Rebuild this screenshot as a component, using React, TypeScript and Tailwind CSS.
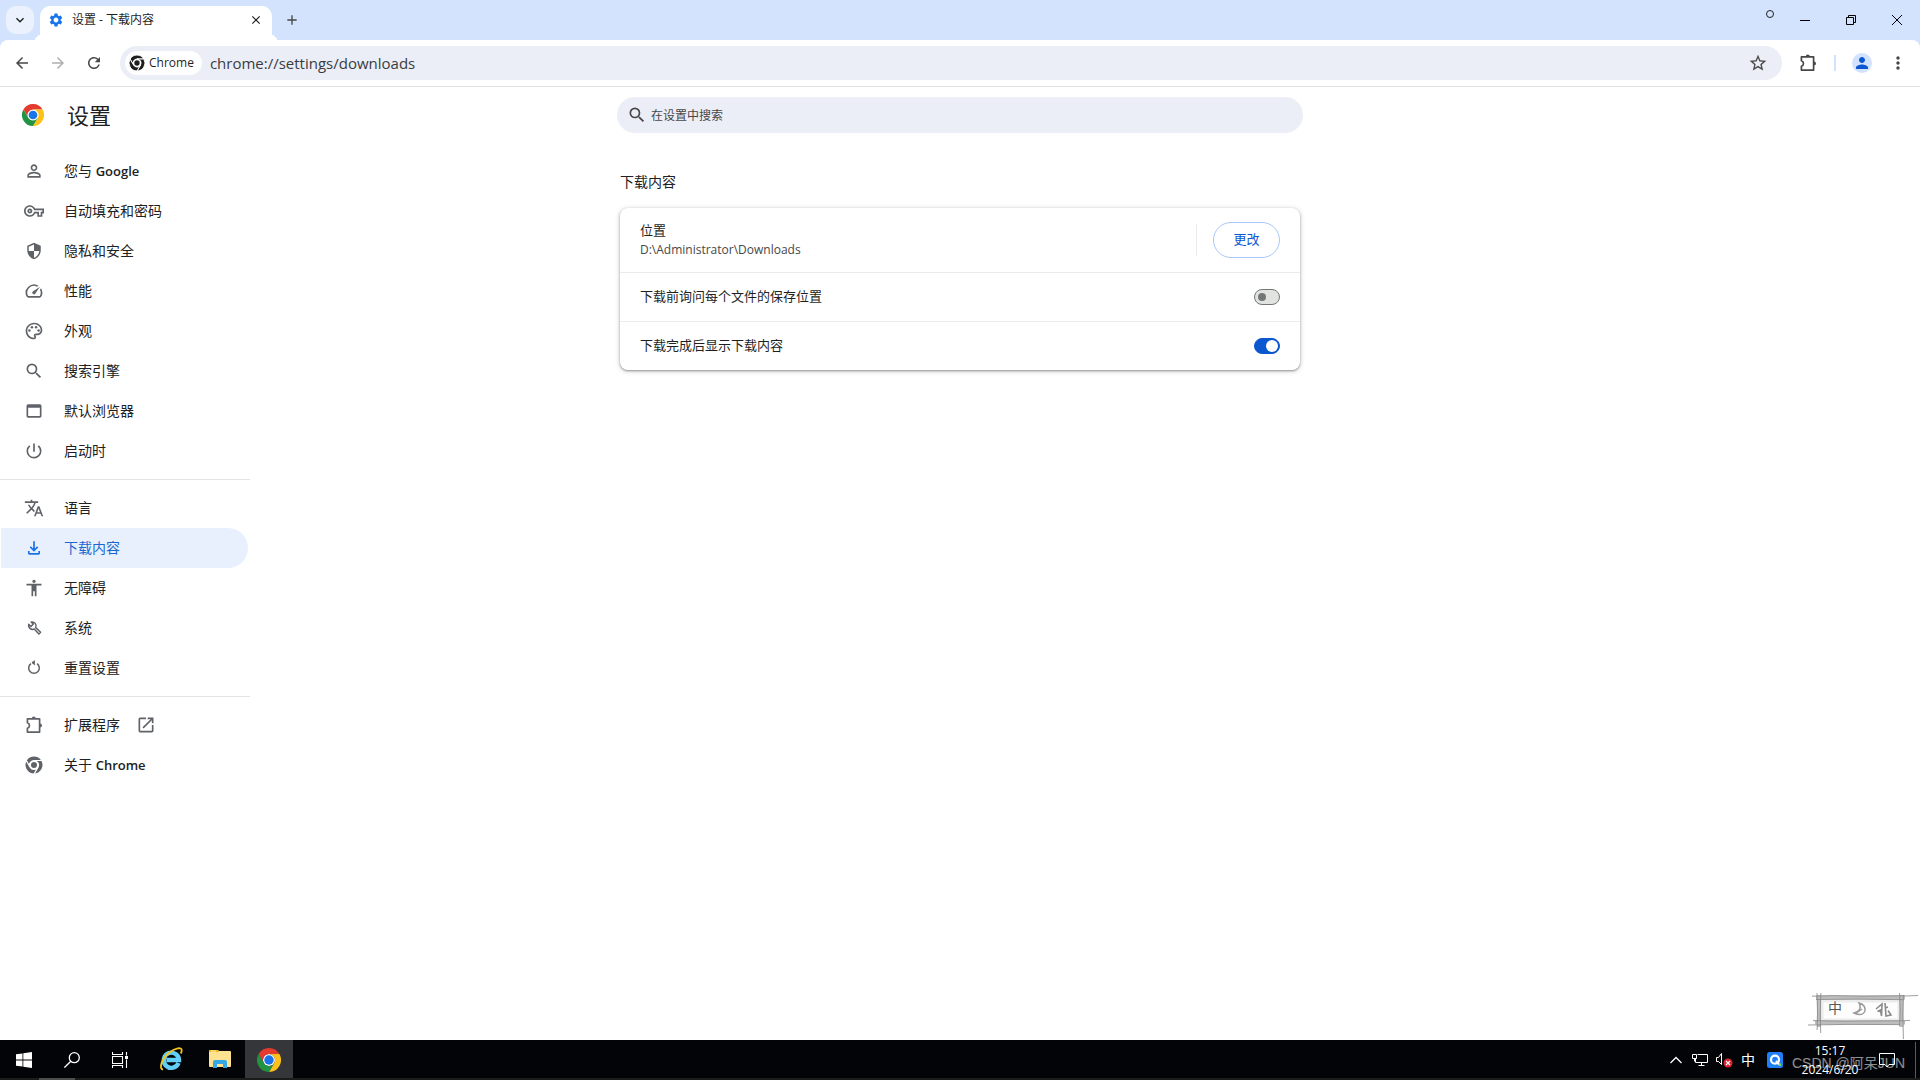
import type { ReactNode } from "react";
import {
  MdAccessibility,
  MdAdd,
  MdArrowBack,
  MdArrowForward,
  MdClose,
  MdKeyboardArrowDown,
  MdMoreVert,
  MdOpenInNew,
  MdOutlinePalette,
  MdOutlineVpnKey,
  MdPerson,
  MdPersonOutline,
  MdPowerSettingsNew,
  MdRefresh,
  MdSearch,
  MdSecurity,
  MdSettings,
  MdSpeed,
  MdStarOutline,
  MdTranslate,
  MdWebAsset,
} from "react-icons/md";

interface IconProps {
  className?: string;
}

interface NavEntry {
  label: string;
  // product name that follows the label, set in a heavier weight
  product?: string;
  href: string;
  icon: ReactNode;
  active?: boolean;
  external?: boolean;
}

const ChromeLogo = ({ className }: IconProps) => (
  <svg viewBox="0 0 48 48" className={className} aria-hidden="true">
    <circle cx="24" cy="24" r="12" fill="#fff" />
    <path
      fill="#e33b2e"
      d="M24 12h20.78a23.99 23.99 0 0 0-41.56 0L13.61 30A11.99 11.99 0 0 1 24 12Z"
    />
    <path
      fill="#fcc21b"
      d="M34.39 30 24 48a23.99 23.99 0 0 0 20.78-36H24a11.99 11.99 0 0 1 10.39 18Z"
    />
    <path
      fill="#229342"
      d="M13.61 30 3.22 12A23.99 23.99 0 0 0 24 48l10.39-18a11.99 11.99 0 0 1-20.78 0Z"
    />
    <circle cx="24" cy="24" r="9.5" fill="#1a73e8" />
  </svg>
);

const ChromeMono = ({ className }: IconProps) => (
  <svg viewBox="0 0 48 48" className={className} aria-hidden="true">
    <g fill="currentColor" stroke="#fff" strokeWidth="3">
      <path d="M24 12h20.78a23.99 23.99 0 0 0-41.56 0L13.61 30A11.99 11.99 0 0 1 24 12Z" />
      <path d="M34.39 30 24 48a23.99 23.99 0 0 0 20.78-36H24a11.99 11.99 0 0 1 10.39 18Z" />
      <path d="M13.61 30 3.22 12A23.99 23.99 0 0 0 24 48l10.39-18a11.99 11.99 0 0 1-20.78 0Z" />
    </g>
    <circle cx="24" cy="24" r="11.500" fill="#fff" />
    <circle cx="24" cy="24" r="8" fill="currentColor" />
  </svg>
);

const PuzzleIcon = ({ className }: IconProps) => (
  <svg viewBox="0 0 20 20" className={className} aria-hidden="true">
    <path
      d="M3.4 3.9h12.2v13.2H3.4v-3.9a2.8 2.8 0 0 0 0-5.4Z"
      fill="none"
      stroke="currentColor"
      strokeWidth="1.7"
      strokeLinejoin="round"
    />
    <path
      d="M7.8 3.4a2 2 0 0 1 4 0ZM16 8.4a2 2 0 0 1 0 4Z"
      fill="currentColor"
    />
  </svg>
);

const DownloadIcon = ({ className }: IconProps) => (
  <svg viewBox="0 0 20 20" className={className} aria-hidden="true">
    <path
      d="M10 3.200v9M6.300 8.800 10 12.500l3.700-3.700M4.800 13v2.200q0 .6.6.6h9.200q.6 0 .6-.6V13"
      fill="none"
      stroke="currentColor"
      strokeWidth="1.700"
    />
  </svg>
);

const WrenchIcon = ({ className }: IconProps) => (
  <svg viewBox="0 0 20 20" className={className} aria-hidden="true">
    <path
      d="M7.200 4 9.300 6.100 7 8.500 4.700 6.300a4 4 0 0 0 5.500 4.700l4.700 5 1.700-1.700-4.900-4.700A4 4 0 0 0 7.200 4Z"
      fill="none"
      stroke="currentColor"
      strokeWidth="1.500"
      strokeLinejoin="round"
    />
  </svg>
);

const ResetIcon = ({ className }: IconProps) => (
  <svg viewBox="0 0 20 20" className={className} aria-hidden="true">
    <path
      d="M7 5.700a5.300 5.300 0 1 0 6 0M8 4.500h2.700"
      fill="none"
      stroke="currentColor"
      strokeWidth="1.5"
    />
    <path d="M10.800 2v5.600L7.600 4.800Z" fill="currentColor" />
  </svg>
);

const iconSize = "size-5";

const navGroups: NavEntry[][] = [
  [
    { label: "您与", product: "Google", href: "#people", icon: <MdPersonOutline className={iconSize} /> },
    { label: "自动填充和密码", href: "#autofill", icon: <MdOutlineVpnKey className={iconSize} /> },
    { label: "隐私和安全", href: "#privacy", icon: <MdSecurity className="size-4.5" /> },
    { label: "性能", href: "#performance", icon: <MdSpeed className={iconSize} /> },
    { label: "外观", href: "#appearance", icon: <MdOutlinePalette className={iconSize} /> },
    { label: "搜索引擎", href: "#search", icon: <MdSearch className={iconSize} /> },
    { label: "默认浏览器", href: "#defaultBrowser", icon: <MdWebAsset className={iconSize} /> },
    { label: "启动时", href: "#onStartup", icon: <MdPowerSettingsNew className={iconSize} /> },
  ],
  [
    { label: "语言", href: "#languages", icon: <MdTranslate className={iconSize} /> },
    { label: "下载内容", href: "#downloads", icon: <DownloadIcon className={iconSize} />, active: true },
    { label: "无障碍", href: "#accessibility", icon: <MdAccessibility className={iconSize} /> },
    { label: "系统", href: "#system", icon: <WrenchIcon className={iconSize} /> },
    { label: "重置设置", href: "#reset", icon: <ResetIcon className={iconSize} /> },
  ],
  [
    { label: "扩展程序", href: "#extensions", icon: <PuzzleIcon className={iconSize} />, external: true },
    { label: "关于", product: "Chrome", href: "#help", icon: <ChromeMono className="size-4.5" /> },
  ],
];

const TabStrip = () => (
  <div className="flex h-10 items-center pl-1.5">
    <button
      aria-label="搜索标签页"
      className="flex size-7 items-center justify-center rounded-[10px] bg-[#ebf2fe] text-[#1f1f1f]"
    >
      <MdKeyboardArrowDown className="size-4" />
    </button>

    {/* Active tab, the pseudo elements round off its feet */}
    <div className="relative ml-1.5 flex h-8.5 w-58 items-center self-end rounded-t-[10px] bg-white pr-2 pb-1.5 pl-2 before:absolute before:bottom-0 before:-left-2.5 before:size-2.5 before:rounded-br-[10px] before:shadow-[5px_5px_0_white] after:absolute after:-right-2.5 after:bottom-0 after:size-2.5 after:rounded-bl-[10px] after:shadow-[-5px_5px_0_white]">
      <MdSettings className="size-4 text-[#1a73e8]" />
      <span className="ml-2 flex-1 text-xs text-[#1f1f1f]">设置 - 下载内容</span>
      <button aria-label="关闭标签页" className="flex size-4 items-center justify-center">
        <MdClose className="size-3.5 text-[#1f1f1f]" />
      </button>
    </div>

    <button aria-label="新标签页" className="ml-3 flex size-4 items-center justify-center">
      <MdAdd className="size-4 text-[#474747]" />
    </button>

    <div className="ml-auto flex h-full text-black">
      <span className="mt-2.5 mr-2 size-2 rounded-full border border-[#1f1f1f]" />
      <button aria-label="最小化" className="flex w-11.5 items-center justify-center">
        <svg viewBox="0 0 10 10" className="size-2.5">
          <path d="M0 5.5h10" stroke="currentColor" />
        </svg>
      </button>
      <button aria-label="还原" className="flex w-11.5 items-center justify-center">
        <svg viewBox="0 0 10 10" className="size-2.5" fill="none" stroke="currentColor">
          <path d="M.5 2.5h7v7h-7zM2.5 2.5v-2h7v7h-2" />
        </svg>
      </button>
      <button aria-label="关闭" className="flex w-11.5 items-center justify-center">
        <svg viewBox="0 0 10 10" className="size-2.5">
          <path d="m0 0 10 10M10 0 0 10" stroke="currentColor" />
        </svg>
      </button>
    </div>
  </div>
);

const Toolbar = () => (
  <div className="flex h-[47px] items-center rounded-t-lg border-b border-[#dfe1e5] bg-white pr-3 pl-3 text-[#474747]">
    <button aria-label="返回" className="flex w-5 justify-center">
      <MdArrowBack className="size-4.5" />
    </button>
    <button aria-label="前进" className="ml-4 flex w-5 justify-center text-[#b0b0b0]">
      <MdArrowForward className="size-4.5" />
    </button>
    <button aria-label="重新加载" className="ml-4 flex w-5 justify-center">
      <MdRefresh className="size-4.5" />
    </button>

    <div className="ml-4 flex h-8.5 flex-1 items-center rounded-full bg-[#ebeef7] pr-3.5 pl-[5px]">
      <button className="flex h-6 items-center gap-1 rounded-full bg-white pr-2 pl-1 text-xs text-[#1f1f1f]">
        <ChromeMono className="size-4" />
        Chrome
      </button>
      <input
        aria-label="地址和搜索栏"
        defaultValue="chrome://settings/downloads"
        className="ml-2 h-full min-w-0 flex-1 bg-transparent text-[15px] text-[#3a3c40] outline-none"
      />
      <button aria-label="为此标签页添加书签">
        <MdStarOutline className="size-5" />
      </button>
    </div>

    <button aria-label="扩展程序" className="ml-4">
      <PuzzleIcon className="size-5" />
    </button>
    <span className="ml-4 h-4 w-0.5 bg-[#d3e3fd]" />
    <button
      aria-label="个人资料"
      className="ml-4 flex size-5 items-center justify-center rounded-full bg-[#d3e3fd] text-[#0b57d0]"
    >
      <MdPerson className="size-4.5" />
    </button>
    <button aria-label="菜单" className="ml-4">
      <MdMoreVert className="size-5" />
    </button>
  </div>
);

const Sidebar = () => (
  <aside className="w-[250px]">
    <div className="flex h-14 items-center gap-[23px] pl-5.5">
      <ChromeLogo className="size-5.5" />
      <h1 className="text-[22px] leading-7 text-[#1f1f1f]">设置</h1>
    </div>
    <nav className="divide-y divide-[#e3e4e6]">
      {navGroups.map((group, i) => (
        <ul key={i} className="py-2">
          {group.map((item) => (
            <li key={item.label}>
              <a
                href={item.href}
                className={`ml-px mr-0.5 flex h-10 items-center rounded-r-full pl-[23px] text-sm ${
                  item.active ? "bg-[#e8f0fe] text-[#1967d2]" : "text-[#202124]"
                }`}
              >
                <span
                  className={`flex w-5 justify-center ${item.active ? "text-[#1a73e8]" : "text-[#5f6368]"}`}
                >
                  {item.icon}
                </span>
                <span className="ml-5">
                  {item.label}{" "}
                  {item.product && <span className="text-[13px] font-semibold">{item.product}</span>}
                </span>
                {item.external && <MdOpenInNew className="ml-4 size-5 text-[#5f6368]" />}
              </a>
            </li>
          ))}
        </ul>
      ))}
    </nav>
  </aside>
);

interface ToggleRowProps {
  id: string;
  label: string;
  checked?: boolean;
}

const ToggleRow = ({ id, label, checked }: ToggleRowProps) => (
  <div className="box-content flex h-12 items-center justify-between px-5">
    <label htmlFor={id}>{label}</label>
    <input
      id={id}
      type="checkbox"
      role="switch"
      defaultChecked={checked}
      className="relative h-4 w-6.5 appearance-none rounded-full border border-[#747775] bg-[#e1e3e1] before:absolute before:top-[3px] before:left-[3px] before:size-2 before:rounded-full before:bg-[#747775] checked:border-[#0b57d0] checked:bg-[#0b57d0] checked:before:top-px checked:before:left-[11px] checked:before:size-3 checked:before:bg-white"
    />
  </div>
);

const Settings = () => (
  <main className="mx-auto w-[686px] pt-2.5">
    <label className="flex h-9 items-center rounded-full bg-[#ebeef7] pl-2.5 text-[#474747]">
      <MdSearch className="size-5" />
      <input
        type="search"
        aria-label="在设置中搜索"
        placeholder="在设置中搜索"
        className="ml-1 flex-1 bg-transparent pt-0.5 text-xs outline-none placeholder:text-[#474747]"
      />
    </label>

    <section className="px-[3px] pt-[37px]">
      <h2 className="text-sm leading-6 text-[#202124]">下载内容</h2>
      <div className="mt-3.5 divide-y divide-[#ebebeb] rounded-lg bg-white text-[13px] text-[#1f1f1f] shadow-[0_1px_2px_rgba(60,64,67,0.45),0_1px_4px_1px_rgba(60,64,67,0.2)]">
        <div className="flex h-[65px] items-center px-5">
          <div className="flex-1 leading-5">
            <p>位置</p>
            <p className="text-xs leading-5 text-[#474747]">D:\Administrator\Downloads</p>
          </div>
          <span className="h-8 w-px bg-[#ebebeb]" />
          <button className="ml-4 h-9 w-[67px] rounded-full border border-[#a8c7fa] text-[13px] text-[#0b57d0]">
            更改
          </button>
        </div>
        <ToggleRow id="ask" label="下载前询问每个文件的保存位置" />
        <ToggleRow id="show" label="下载完成后显示下载内容" checked />
      </div>
    </section>
  </main>
);

/* Pencil sketched frame of the input method */
const ImeBar = () => (
  <div className="absolute right-0 bottom-0 h-12 w-28">
    <svg viewBox="0 0 112 48" className="size-full" fill="none" aria-hidden="true">
      <path d="M11 6h83v25H11z" fill="#fdfdfd" />
      <path d="M12 9h81M12 28h81M14 7v22M91 7v22" stroke="#ececec" strokeWidth="3" />
      <path
        d="M8 5.500h89M7 30.500h90M11 3v32M93.500 3v32"
        stroke="#bdbdbd"
        strokeWidth="4"
      />
      <path
        d="M4 4.200l20-.6 30 .5 43-.4M8 7.500l42-.4 46 .6M97 4l13-.5M5 28.600l30 .5 62-.4 5-.3M0 33l40-.6 52 .2M9 1l.5 20-.4 17M12.800 1l-.5 22 .4 18M91.600 1l.5 17-.5 16M95.400 3l-.6 20 .6 24"
        stroke="#858585"
        strokeWidth=".8"
      />
      <path
        d="M51 11q4 7-5 10 8 4 11-2 1-6-6-8ZM47 22l7-5"
        stroke="#9a9a9a"
        strokeWidth="1.400"
      />
      <path
        d="m68 17 6-5-.5 12-1-6-3 1.500M77 11l1 13 5-1-3-4.500M77 16l3-1"
        stroke="#8a8a8a"
        strokeWidth="1.600"
      />
    </svg>
    <span className="absolute top-1 left-5 text-sm leading-6 text-[#555]">中</span>
  </div>
);

const taskButton = "flex h-full w-12 items-center justify-center";

const Taskbar = () => (
  <footer className="bg-[#020407] text-white">
    <div className="flex h-[38px] items-center">
      <div className="flex h-full">
        <button aria-label="开始" className={taskButton}>
          <svg viewBox="0 0 16 16" className="mt-0.5 size-4" fill="currentColor">
            <path d="m0 2.3 6.5-.9v6.2H0zM7.3 1.3 16 0v7.6H7.3zM0 8.4h6.5v6.2L0 13.7zM7.3 8.4H16V16l-8.7-1.2z" />
          </svg>
        </button>
        <button aria-label="搜索" className={taskButton}>
          <svg viewBox="0 0 16 16" className="mt-0.5 size-4" fill="none" stroke="currentColor" strokeWidth="1.3">
            <circle cx="10.3" cy="5.7" r="5" />
            <path d="M6.8 9.2.4 15.6" />
          </svg>
        </button>
        <button aria-label="任务视图" className={taskButton}>
          <svg viewBox="0 0 16 16" className="mt-0.5 size-4" fill="none" stroke="currentColor" strokeWidth="1.1">
            <path d="M.5 0v2.500h10V0M.5 16v-2.500h10V16M.5 4.500h10v7H.5zM14.500 0v3.500M14.500 7.500V16" />
            <path d="M13 4h3v3h-3z" fill="currentColor" stroke="none" />
          </svg>
        </button>
      </div>
      <div className="ml-[3px] flex h-full gap-px">
        <button aria-label="Internet Explorer" className={taskButton}>
          <svg viewBox="0 0 24 24" className="size-6" fill="none">
            <path d="M19.500 16A7.600 7.600 0 1 1 20 13H7.500" stroke="#62cff9" strokeWidth="4.400" />
            <path
              d="M4 22.500C-.5 22 2.500 11.500 10.500 5.500 16 1.300 23-.5 22.700 3.500q0 1.500-1 3"
              stroke="#f5c41c"
              strokeWidth="1.800"
            />
          </svg>
        </button>
        <button aria-label="文件资源管理器" className={taskButton}>
          <svg viewBox="0 0 22 18" className="h-4.5 w-5.5">
            <path d="M0 1q0-1 1-1h8l1 1h11q1 0 1 1v14q0 1-1 1H1q-1 0-1-1Z" fill="#ffe391" />
            <path d="M0 1q0-1 1-1h8l1 2H0Z" fill="#f3b71e" />
            <path d="M2 1h5" stroke="#fff" strokeWidth=".8" />
            <path d="M4 18v-6q0-2 2-2h10q2 0 2 2v6h-4v-4H8v4Z" fill="#35a9e6" />
          </svg>
        </button>
        <button
          aria-label="Google Chrome"
          className="flex h-full w-12 items-center justify-center bg-[#35363a]"
        >
          <ChromeLogo className="mt-0.5 size-6" />
        </button>
      </div>

      <div className="ml-auto flex h-full items-center pt-0.5">
        <button aria-label="显示隐藏的图标">
          <svg viewBox="0 0 12 12" className="size-3" fill="none" stroke="currentColor" strokeWidth="1.3">
            <path d="M.5 9 6 3.500 11.500 9" />
          </svg>
        </button>
        <button aria-label="网络" className="ml-2.5">
          <svg viewBox="0 0 16 14" className="h-3.5 w-4" fill="none" stroke="currentColor">
            <path d="M5.500 1.500h10v8H3.500V6M9.500 9.500v3M6.500 12.500h6M.5 1.500h4v4h-4zM2.500 5.500v3" />
          </svg>
        </button>
        <button aria-label="音量" className="ml-2">
          <svg viewBox="0 0 17 16" className="h-4 w-[17px]" fill="none">
            <path d="M.5 5.500h2l3-4v11l-3-3h-2z" stroke="currentColor" />
            <circle cx="12" cy="11" r="4.500" fill="#d9232e" />
            <path d="m10 9 4 4m0-4-4 4" stroke="#fff" strokeWidth="1.200" />
          </svg>
        </button>
        <button aria-label="输入法" className="ml-2 text-sm">
          中
        </button>
        <button aria-label="浏览器助手" className="ml-3">
          <svg viewBox="0 0 16 16" className="size-4">
            <rect width="16" height="16" rx="2.500" fill="#1f80f5" />
            <circle cx="8" cy="7.700" r="4" fill="none" stroke="#fff" strokeWidth="2.200" />
            <path d="m9 9 3 3.500" stroke="#fff" strokeWidth="2" />
            <circle cx="13" cy="12.800" r="1.300" fill="#7be04a" />
          </svg>
        </button>
        <div className="relative ml-4.5 flex items-center">
          <time className="w-[58px] text-center text-xs leading-[19px]">
            <span className="block">15:17</span>
            <span className="block">2024/6/20</span>
          </time>
          <button aria-label="通知" className="ml-5">
            <svg viewBox="0 0 16 16" className="size-4" fill="none" stroke="currentColor">
              <path d="M.5 1.500h15v11H10L8 15l-2-2.500H.5z" />
            </svg>
          </button>
          <span className="absolute top-2.5 -right-2.5 font-['Liberation_Sans','Noto_Sans_CJK_SC',sans-serif] text-sm leading-6 whitespace-nowrap text-white/55">
            CSDN @阿呆JUN
          </span>
        </div>
        <span className="ml-5 h-full w-px bg-[#5a5b5d]" />
        <span className="w-1" />
      </div>
    </div>
    {/* Thin strip with a scroll thumb under the bar */}
    <div className="h-0.5 bg-[#1b1b1b] pl-[39px]">
      <div className="h-full w-9 bg-[#4d4d4d]" />
    </div>
  </footer>
);

export default function App() {
  return (
    <div className="flex min-h-screen flex-col bg-[#d3e3fd] font-['Open_Sans','Noto_Sans_CJK_SC',sans-serif]">
      <header>
        <TabStrip />
        <Toolbar />
      </header>
      <div className="relative grid flex-1 grid-cols-[250px_1fr_250px] items-start bg-white">
        <Sidebar />
        <Settings />
        <ImeBar />
      </div>
      <Taskbar />
    </div>
  );
}
